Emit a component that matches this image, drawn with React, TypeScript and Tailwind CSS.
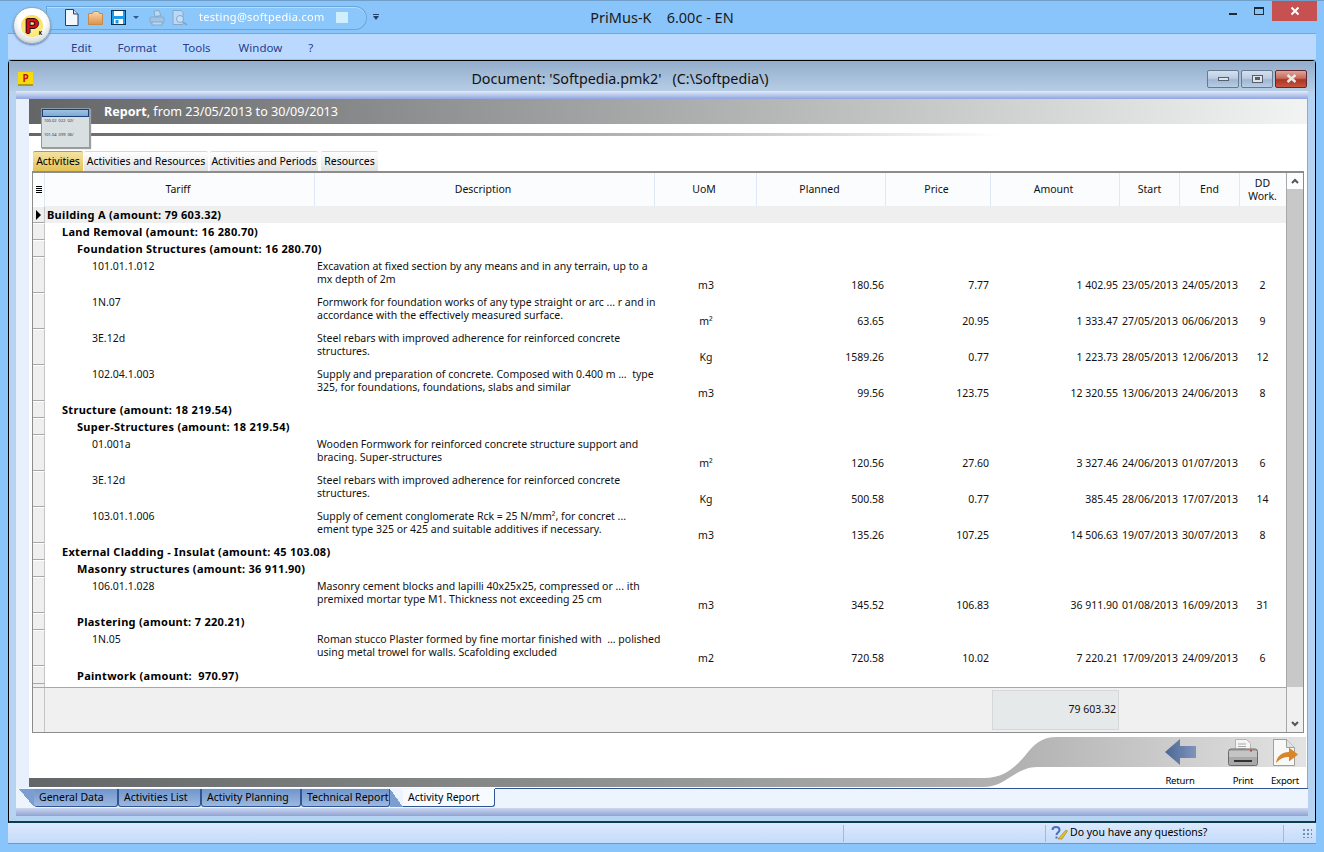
import type { ReactNode } from "react";

type Row =
  | { kind: "group"; level: 0 | 1 | 2; text: string; h: number; shaded?: boolean; arrow?: boolean }
  | {
      kind: "item";
      tariff: string;
      desc: [string, string];
      uom: string;
      planned: string;
      price: string;
      amount: string;
      start: string;
      end: string;
      dd: string;
    };

const rows: Row[] = [
  { kind: "group", level: 0, text: "Building A (amount: 79 603.32)", h: 17, shaded: true, arrow: true },
  { kind: "group", level: 1, text: "Land Removal (amount: 16 280.70)", h: 17 },
  { kind: "group", level: 2, text: "Foundation Structures (amount: 16 280.70)", h: 17 },
  { kind: "item", tariff: "101.01.1.012", desc: ["Excavation at fixed section by any means and in any terrain, up to a", "mx depth of 2m"], uom: "m3", planned: "180.56", price: "7.77", amount: "1 402.95", start: "23/05/2013", end: "24/05/2013", dd: "2" },
  { kind: "item", tariff: "1N.07", desc: ["Formwork for foundation works of any type straight or arc ... r and in", "accordance with the effectively measured surface."], uom: "m²", planned: "63.65", price: "20.95", amount: "1 333.47", start: "27/05/2013", end: "06/06/2013", dd: "9" },
  { kind: "item", tariff: "3E.12d", desc: ["Steel rebars with improved adherence for reinforced concrete", "structures."], uom: "Kg", planned: "1589.26", price: "0.77", amount: "1 223.73", start: "28/05/2013", end: "12/06/2013", dd: "12" },
  { kind: "item", tariff: "102.04.1.003", desc: ["Supply and preparation of concrete. Composed with 0.400 m ...  type", "325, for foundations, foundations, slabs and similar"], uom: "m3", planned: "99.56", price: "123.75", amount: "12 320.55", start: "13/06/2013", end: "24/06/2013", dd: "8" },
  { kind: "group", level: 1, text: "Structure (amount: 18 219.54)", h: 17 },
  { kind: "group", level: 2, text: "Super-Structures (amount: 18 219.54)", h: 17 },
  { kind: "item", tariff: "01.001a", desc: ["Wooden Formwork for reinforced concrete structure support and", "bracing. Super-structures"], uom: "m²", planned: "120.56", price: "27.60", amount: "3 327.46", start: "24/06/2013", end: "01/07/2013", dd: "6" },
  { kind: "item", tariff: "3E.12d", desc: ["Steel rebars with improved adherence for reinforced concrete", "structures."], uom: "Kg", planned: "500.58", price: "0.77", amount: "385.45", start: "28/06/2013", end: "17/07/2013", dd: "14" },
  { kind: "item", tariff: "103.01.1.006", desc: ["Supply of cement conglomerate Rck = 25 N/mm², for concret ...", "ement type 325 or 425 and suitable additives if necessary."], uom: "m3", planned: "135.26", price: "107.25", amount: "14 506.63", start: "19/07/2013", end: "30/07/2013", dd: "8" },
  { kind: "group", level: 1, text: "External Cladding - Insulat (amount: 45 103.08)", h: 17 },
  { kind: "group", level: 2, text: "Masonry structures (amount: 36 911.90)", h: 17 },
  { kind: "item", tariff: "106.01.1.028", desc: ["Masonry cement blocks and lapilli 40x25x25, compressed or ... ith", "premixed mortar type M1. Thickness not exceeding 25 cm"], uom: "m3", planned: "345.52", price: "106.83", amount: "36 911.90", start: "01/08/2013", end: "16/09/2013", dd: "31" },
  { kind: "group", level: 2, text: "Plastering (amount: 7 220.21)", h: 17 },
  { kind: "item", tariff: "1N.05", desc: ["Roman stucco Plaster formed by fine mortar finished with  ... polished", "using metal trowel for walls. Scafolding excluded"], uom: "m2", planned: "720.58", price: "10.02", amount: "7 220.21", start: "17/09/2013", end: "24/09/2013", dd: "6" },
  { kind: "group", level: 2, text: "Paintwork (amount:  970.97)", h: 18 },
];

const gridCols = "grid grid-cols-[270px_340px_102px_129px_105px_129px_60px_60px_45px]";
const headers = ["Tariff", "Description", "UoM", "Planned", "Price", "Amount", "Start", "End"];

function Selector({ h, arrow }: { h: number; arrow?: boolean }) {
  return (
    <div className={`w-[12px] shrink-0 bg-[#efefef] border-b border-b-[#a8a8a8] border-t border-t-white border-r border-r-[#c4c4c4] flex items-center justify-center ${h === 17 ? "h-[17px]" : h === 18 ? "h-[18px]" : "h-[36px]"}`}>
      {arrow && <div className="w-0 h-0 border-y-[5px] border-y-transparent border-l-[5px] border-l-black" />}
    </div>
  );
}

function TableRow({ row }: { row: Row }) {
  if (row.kind === "group") {
    const pad = row.level === 0 ? "pl-[2px]" : row.level === 1 ? "pl-[17px]" : "pl-[32px]";
    return (
      <div className="flex">
        <Selector h={row.h} arrow={row.arrow} />
        <div className={`flex-1 flex items-center font-bold tracking-[0.3px] text-[11px] leading-[13px] text-black whitespace-pre ${pad} ${row.shaded ? "bg-[#efefef]" : "bg-white"}`}>
          {row.text}
        </div>
      </div>
    );
  }
  return (
    <div className="flex">
      <Selector h={36} />
      <div className={`flex-1 h-[36px] bg-white ${gridCols}`}>
        <div className="pl-[47px] pt-[3px] leading-[13px]">{row.tariff}</div>
        <div className="pl-[2px] pt-[3px] leading-[13px] whitespace-pre">
          {row.desc[0]}
          <br />
          {row.desc[1]}
        </div>
        <div className="self-end pb-[1px] text-center leading-[13px]">{row.uom}</div>
        <div className="self-end pb-[1px] pr-[2px] text-right leading-[13px]">{row.planned}</div>
        <div className="self-end pb-[1px] pr-[2px] text-right leading-[13px]">{row.price}</div>
        <div className="self-end pb-[1px] pr-[2px] text-right leading-[13px]">{row.amount}</div>
        <div className="self-end pb-[1px] text-center leading-[13px]">{row.start}</div>
        <div className="self-end pb-[1px] text-center leading-[13px]">{row.end}</div>
        <div className="self-end pb-[1px] text-center leading-[13px]">{row.dd}</div>
      </div>
    </div>
  );
}

function DocIcon() {
  return (
    <svg width="15" height="17" viewBox="0 0 15 17">
      <path d="M1.500.5h8l4.500 4.500v11.500h-12.500z" fill="#f2f6fd" stroke="#2b3f63" />
      <path d="M9.500.5v4.500h4.500" fill="#cfdcf0" stroke="#2b3f63" />
    </svg>
  );
}

function FolderIcon() {
  return (
    <svg width="15" height="14" viewBox="0 0 15 14">
      <defs>
        <linearGradient id="fold" x1="0" y1="0" x2="0" y2="1">
          <stop offset="0" stopColor="#f8d9ad" />
          <stop offset="1" stopColor="#e0914a" />
        </linearGradient>
      </defs>
      <path d="M.5 2.500h4l1-2h5l1 2h3v11h-14z" fill="url(#fold)" stroke="#c98a4a" />
    </svg>
  );
}

function SaveIcon() {
  return (
    <svg width="15" height="15" viewBox="0 0 15 15">
      <rect x=".5" y=".5" width="14" height="14" fill="#1e9be8" stroke="#10324f" />
      <rect x="3" y="1" width="9" height="5" fill="#ffffff" />
      <rect x="3" y="9" width="9" height="5" fill="#ffffff" />
      <rect x="4.500" y="10" width="3" height="3.500" fill="#1e9be8" />
    </svg>
  );
}

function MutedPrinter() {
  return (
    <svg width="16" height="16" viewBox="0 0 16 16" className="opacity-60">
      <path d="M5 1l5-.500 2 5-6 1z" fill="#dbe6f2" stroke="#7f95ab" />
      <rect x="1" y="7" width="14" height="6" rx="1" fill="#b2c2d2" stroke="#7f95ab" />
      <rect x="3" y="12" width="10" height="3" fill="#dbe6f2" stroke="#7f95ab" />
    </svg>
  );
}

function MutedPreview() {
  return (
    <svg width="17" height="16" viewBox="0 0 17 16" className="opacity-60">
      <path d="M1 .5h8l2 2v12h-10z" fill="#dbe6f2" stroke="#7f95ab" />
      <circle cx="8" cy="9" r="3.500" fill="#e8f0f8" stroke="#7f95ab" />
      <path d="M11 12l4 3" stroke="#7f95ab" strokeWidth="2" />
    </svg>
  );
}

function ReturnIcon() {
  return (
    <svg width="31" height="26" viewBox="0 0 31 26">
      <defs>
        <linearGradient id="ret" x1="0" y1="0" x2="1" y2="0">
          <stop offset="0" stopColor="#4b6797" />
          <stop offset="1" stopColor="#8095b8" />
        </linearGradient>
      </defs>
      <path d="M0 13 15 0v7h16v12H15v7z" fill="url(#ret)" />
    </svg>
  );
}

function PrintIcon() {
  return (
    <svg width="30" height="27" viewBox="0 0 30 27">
      <path d="M7.500.500h11l4 4v9h-15z" fill="#f4f4f4" stroke="#b5b5b5" />
      <path d="M10 5h8M10 7.500h8M10 10h8" stroke="#a9a9a9" />
      <path d="M3 10h24q2.500 0 2.500 2.500v12q0 2-2 2h-25q-2 0-2-2v-12Q.500 10 3 10z" fill="#a9a9a9" stroke="#6b6b6b" />
      <rect x="1" y="12" width="28" height="6" fill="#c4c4c4" />
      <rect x="6" y="21" width="18" height="2" fill="#333333" />
      <rect x="22" y="11" width="2" height="1.500" fill="#c73a3a" />
    </svg>
  );
}

function ExportIcon() {
  return (
    <svg width="25" height="27" viewBox="0 0 25 27">
      <path d="M.500.500h13l8 8v18h-21z" fill="#f8f8f8" stroke="#9f9f9f" />
      <path d="M13.500.500v8h8" fill="#e2e2e2" stroke="#9f9f9f" />
      <path d="M3 24c1-7 6-11 13-11V8.500l9 7-9 7V18c-5-.5-9 1.500-13 6z" fill="#d98528" />
    </svg>
  );
}

function ToolAction({ icon, label, className }: { icon: ReactNode; label: string; className: string }) {
  return (
    <div className={`flex flex-col items-center ${className}`}>
      <div className="h-[30px] pt-[1px] flex items-center justify-center">{icon}</div>
      <span className="mt-[8px] leading-[13px] text-[9.500px] tracking-[-0.2px] text-black">{label}</span>
    </div>
  );
}

function DocButton({ children, red }: { children: ReactNode; red?: boolean }) {
  return (
    <div
      className={`w-[32px] h-[18px] rounded-[2px] border flex items-center justify-center ${
        red
          ? "border-[#5d2a33] bg-[linear-gradient(#e2a498_0%,#c76a58_45%,#a93523_55%,#c9553f_100%)]"
          : "border-[#65798f] bg-[linear-gradient(#d4e0ee_0%,#bccde2_45%,#9fb6d2_55%,#b9cde4_100%)]"
      }`}
    >
      {children}
    </div>
  );
}

function BottomTab({ label, className }: { label: string; className: string }) {
  return (
    <div className={`h-[18px] flex items-center pl-[5px] pt-[1px] rounded-b-[3px] border-b border-x border-x-[#2f5597] border-b-[#2f5597] bg-[linear-gradient(#6f95cb,#9db8df)] text-black whitespace-nowrap ${className}`}>
      {label}
    </div>
  );
}

function SubTab({ label, active, className }: { label: string; active?: boolean; className: string }) {
  return (
    <div
      className={`h-[20px] flex items-center justify-center rounded-t-[2px] border-t text-black whitespace-nowrap ${className} ${
        active
          ? "border-t-[#b99a3c] bg-[linear-gradient(#f3e2a4,#e4c354)]"
          : "border-t-[#d8d8d8] bg-[linear-gradient(#ffffff,#e0e0e0)]"
      }`}
    >
      {label}
    </div>
  );
}

function AppLogo() {
  return (
    <div className="absolute left-[13px] top-[6px] z-10 w-[38px] h-[37px] rounded-full border border-[#8fa6bd] bg-[radial-gradient(circle_at_50%_35%,#ffffff_45%,#dfe3e6_70%,#9aa3ab_100%)] shadow-[0_1px_2px_#5a7a99] flex items-center justify-center">
      <div className="relative w-[22px] h-[22px] rounded-full bg-[radial-gradient(circle_at_50%_60%,#fff3a0,#f7d84a)] flex items-center justify-center">
        <span className="font-['Liberation_Sans',sans-serif] font-bold text-[20px] leading-none text-[#d3101c] [text-shadow:1px_0_0_#3a0505,-1px_0_0_#3a0505,0_1px_0_#3a0505,0_-1px_0_#3a0505]">P</span>
        <span className="absolute right-[1px] bottom-[1px] text-[5px] leading-none font-bold text-black">K</span>
      </div>
    </div>
  );
}

export default function App() {
  return (
    <div className="relative w-[1324px] h-[852px] overflow-hidden flex flex-col bg-[#89c5fb] border-t border-t-[#6f9fc9] font-['Noto_Sans',sans-serif] text-[10.500px] text-[#111111]">
      <AppLogo />

      {/* Title bar */}
      <div className="relative h-[32px] shrink-0 flex items-center">
        <div className="ml-[46px] mt-[1px] w-[321px] h-[24px] rounded-r-full rounded-l-[10px] border border-[#6ba6d8] bg-[#8cc7fb] shadow-[inset_0_1px_0_#b4dcfd] flex items-center pl-[17px]">
          <DocIcon />
          <div className="ml-[9px]"><FolderIcon /></div>
          <div className="ml-[8px]"><SaveIcon /></div>
          <div className="ml-[7px] w-0 h-0 border-x-[3px] border-x-transparent border-t-[3px] border-t-[#2f5a90]" />
          <div className="ml-[10px]"><MutedPrinter /></div>
          <div className="ml-[7px]"><MutedPreview /></div>
          <span className="ml-[10px] w-[128px] text-[11px] text-white blur-[0.6px] whitespace-nowrap tracking-[0.3px]">testing@softpedia.com</span>
          <div className="ml-[9px] w-[12px] h-[11px] bg-[#cfeffd]" />
        </div>
        <div className="ml-[6px] flex flex-col items-center gap-[1px]">
          <div className="w-[6px] h-[1px] bg-[#22406e]" />
          <div className="w-0 h-0 border-x-[3px] border-x-transparent border-t-[4px] border-t-[#22406e]" />
        </div>
        <div className="flex-1" />
        <div className="flex items-start self-start">
          <div className="w-[26px] h-[20px] flex items-center justify-center"><div className="w-[8px] h-[2px] mt-[6px] bg-[#1c2a3a]" /></div>
          <div className="w-[26px] h-[20px] flex items-center justify-center"><div className="w-[10px] h-[8px] border border-t-2 border-[#1c2a3a]" /></div>
          <div className="mr-[7px] w-[45px] h-[20px] bg-[#c75050] flex items-center justify-center">
            <svg width="10" height="10" viewBox="0 0 10 10"><path d="M1.500 1.500l7 7M8.500 1.500l-7 7" stroke="#ffffff" strokeWidth="2" /></svg>
          </div>
        </div>
        <div className="absolute left-0 right-0 top-[7px] text-center text-[14.500px] leading-[18px] text-[#1a1a1a] whitespace-pre pointer-events-none">PriMus-K    6.00c - EN</div>
      </div>

      {/* Ribbon menu band */}
      <div className="mx-[8px] h-[27px] shrink-0 pt-[2px] bg-[#bbd9ff] border-t border-t-[#77a7d8] border-b border-b-[#9fc0e8] flex items-center text-[11.500px] text-[#26408c]">
        <span className="ml-[63px]">Edit</span>
        <span className="ml-[26px]">Format</span>
        <span className="ml-[26px]">Tools</span>
        <span className="ml-[28px]">Window</span>
        <span className="ml-[26px]">?</span>
      </div>

      {/* Document window */}
      <div className="mx-[8px] flex-1 min-h-0 flex flex-col rounded-t-[4px] border-x border-t border-black border-b-2 border-b-[#0d3c4a] shadow-[inset_0_1px_0_#ffffff] bg-[#b7d3f2]">
        <div className="h-[30px] shrink-0 flex items-center pt-[5px] pl-[9px] pr-[8px] bg-[linear-gradient(#93adca,#b6cde6)]">
          <div className="w-[15px] h-[14px] bg-[#f5d90a] border-b-2 border-b-[#b09a10] flex items-center justify-center font-bold text-[10px] leading-none text-[#c4121a]">P</div>
          <div className="flex-1 mt-[1px] text-center text-[14.300px] text-[#111111] whitespace-pre">Document: 'Softpedia.pmk2'   (C:\Softpedia\)</div>
          <div className="flex gap-[2px]">
            <DocButton><div className="w-[11px] h-[4px] bg-[#dfe4ea] border border-[#55606d]" /></DocButton>
            <DocButton><div className="w-[11px] h-[8px] bg-[#dfe4ea] border border-[#55606d] flex items-center justify-center"><div className="w-[5px] h-[3px] bg-[#55606d]" /></div></DocButton>
            <DocButton red>
              <svg width="11" height="9" viewBox="0 0 11 9"><path d="M1.500 1l8 7M9.500 1l-8 7" stroke="#e8e8e8" strokeWidth="2.500" /></svg>
            </DocButton>
          </div>
        </div>

        <div className="flex-1 min-h-0 flex flex-col px-[7px]">
          <div className="h-[8px] shrink-0 bg-[linear-gradient(#e3ecf9,#8fa5de)]" />
          <div className="flex h-[689px] shrink-0 border-r border-r-[#92a6de]">
            <div className="w-[13px] shrink-0 bg-[#e8f0fd]" />
            <div className="relative flex-1 min-w-0 flex flex-col bg-white">
              {/* Report heading */}
              <div className="h-[25px] shrink-0 flex items-center pt-[1px] pl-[75px] bg-[linear-gradient(90deg,#646566_0%,#8d8f90_30%,#b8baba_60%,#f2f3f3_100%)] text-[12.600px] text-white whitespace-pre">
                <b>Report</b>, from 23/05/2013 to 30/09/2013
              </div>
              <div className="mt-[9px] h-[3px] shrink-0 bg-[linear-gradient(90deg,#666666_0%,#b9b9b9_50%,#ffffff_76%)]" />
              <div className="absolute left-[12px] top-[9px] w-[49px] h-[40px] border border-[#8f9aa5] bg-[#d7dfe0] shadow-[1px_1px_1px_#a0a0a0]">
                <div className="h-[8px] border border-[#1d3f7a] bg-[linear-gradient(#9cc3e6,#7fa9d1)]" />
                <div className="mt-[1px] pl-[2px] text-[4px] leading-[5px] text-[#333333] whitespace-pre">100.02  022  02/</div>
                <div className="mt-[9px] pl-[2px] text-[4px] leading-[5px] text-[#333333] whitespace-pre">101.04  099  06/</div>
              </div>

              <div className="mt-[15px] ml-[4px] h-[20px] shrink-0 flex gap-[1px]">
                <SubTab label="Activities" active className="w-[50px]" />
                <SubTab label="Activities and Resources" className="w-[124px]" />
                <SubTab label="Activities and Periods" className="w-[108px] ml-[1px]" />
                <SubTab label="Resources" className="w-[57px] ml-[2px]" />
              </div>

              {/* Grid */}
              <div className="ml-[3px] w-[1272px] h-[562px] shrink-0 flex border-x border-b border-t-2 border-[#8c8c8c]">
                <div className="flex-1 min-w-0 flex flex-col">
                  <div className="flex h-[33px] shrink-0 bg-[#fbfcfe]">
                    <div className="w-[12px] shrink-0 bg-[#fbfcfe] flex flex-col items-center justify-center gap-[1px] border-r border-r-[#dfe8f5]">
                      <div className="w-[6px] h-[1px] bg-black" />
                      <div className="w-[6px] h-[1px] bg-black" />
                      <div className="w-[6px] h-[1px] bg-black" />
                      <div className="w-[6px] h-[1px] bg-black" />
                    </div>
                    <div className={`flex-1 ${gridCols}`}>
                      {headers.map((h, i) => (
                        <div key={h} className={`flex items-center justify-center border-r border-r-[#dfe8f5] ${i < 6 ? "pr-[3px]" : ""}`}>{h}</div>
                      ))}
                      <div className="flex items-center justify-center text-center leading-[13px]">DD<br />Work.</div>
                    </div>
                  </div>
                  <div className="h-[481px] shrink-0 flex flex-col">
                    {rows.map((r, i) => <TableRow key={i} row={r} />)}
                    <div className="flex-1 flex"><div className="w-[12px] bg-[#efefef] border-r border-r-[#c4c4c4]" /></div>
                  </div>
                  <div className="flex-1 flex border-t border-t-[#a8a8a8] bg-[#f0f0f0]">
                    <div className="w-[12px] shrink-0 border-r border-r-[#c4c4c4]" />
                    <div className="ml-[947px] mt-[2px] w-[127px] h-[40px] bg-[#e6e9ea] border border-[#d6d8d8] flex items-center justify-end pr-[2px]">79 603.32</div>
                  </div>
                </div>
                <div className="w-[17px] shrink-0 flex flex-col items-center bg-[#f0f0f0] border-l border-l-[#a8a8a8]">
                  <div className="h-[16px] w-full flex items-center justify-center bg-[#fbfcfe]">
                    <svg width="8" height="6" viewBox="0 0 8 6"><path d="M1 5l3-3 3 3" fill="none" stroke="#555555" strokeWidth="2" /></svg>
                  </div>
                  <div className="w-full h-[498px] bg-[#c8c8c8]" />
                  <div className="flex-1" />
                  <div className="h-[16px] flex items-center justify-center">
                    <svg width="8" height="6" viewBox="0 0 8 6"><path d="M1 1l3 3 3-3" fill="none" stroke="#555555" strokeWidth="2" /></svg>
                  </div>
                </div>
              </div>

              {/* Swoosh and actions */}
              <div className="relative h-[54px] shrink-0 flex justify-end pt-[4px]">
                <svg className="absolute inset-0" width="1277" height="54" viewBox="0 0 1277 54">
                  <defs>
                    <linearGradient id="swoosh" x1="0" y1="0" x2="1" y2="0">
                      <stop offset="0" stopColor="#636566" />
                      <stop offset="0.4" stopColor="#8a8c8c" />
                      <stop offset="0.78" stopColor="#b3b3b3" />
                      <stop offset="1" stopColor="#e3e3e3" />
                    </linearGradient>
                  </defs>
                  <path d="M0 45H955C975 45 985 35 995 24C1005 11 1012 4 1028 4H1277V34H1008C995 34 985 42 975 48C968 52 962 54 952 54H0Z" fill="url(#swoosh)" />
                </svg>
                <ToolAction icon={<ReturnIcon />} label="Return" className="relative w-[62px]" />
                <ToolAction icon={<PrintIcon />} label="Print" className="relative w-[48px] ml-[8px]" />
                <ToolAction icon={<ExportIcon />} label="Export" className="relative w-[36px] mr-[4px]" />
              </div>
            </div>
          </div>

          {/* Sheet tabs */}
          <div className="h-[20px] shrink-0 flex items-start bg-[#eef4fe]">
            <div className="mt-[1px] ml-[3px] flex">
              <div className="w-[15px] h-[18px] bg-[linear-gradient(to_bottom_left,#7c9dd0_50%,#eef4fe_50%)]" />
              <BottomTab label="General Data" className="w-[84px] border-l-0" />
              <BottomTab label="Activities List" className="w-[83px]" />
              <BottomTab label="Activity Planning" className="w-[100px]" />
              <BottomTab label="Technical Report" className="w-[89px]" />
              <div className="w-[13px] h-[18px] bg-[linear-gradient(to_top_right,#7c9dd0_50%,#eef4fe_50%)]" />
              <div className="w-[92px] h-[18px] flex items-center pl-[5px] pt-[1px] rounded-br-[3px] border-r border-b border-[#2f5597] bg-[#f7faff] text-black whitespace-nowrap">Activity Report</div>
            </div>
            <div className="flex-1 h-[1px] bg-[#2f5597]" />
          </div>
          <div className="h-[8px] shrink-0 bg-[linear-gradient(#cdd8f1,#8fa2d2)]" />
        </div>
      </div>

      {/* Status bar */}
      <div className="mx-[8px] mb-[8px] h-[21px] shrink-0 flex items-center bg-[linear-gradient(#dbe9fd_0%,#cfe2fb_50%,#c3dbfa_100%)] border-b border-b-[#5f9fd6]">
        <div className="ml-[835px] w-[1px] h-[17px] bg-[#9db9dc]" />
        <div className="ml-[201px] w-[1px] h-[17px] bg-[#9db9dc]" />
        <svg className="ml-[5px]" width="17" height="14" viewBox="0 0 17 14">
          <path d="M1.500 4c0-4 7-4 7 0 0 2.500-3 2.500-3 5" fill="none" stroke="#4c6fb8" strokeWidth="2" />
          <rect x="4.500" y="10.500" width="2" height="2" fill="#4c6fb8" />
          <path d="M7 13l8-9 1.500 1-5.500 8z" fill="#e8c02a" stroke="#7a6a1a" strokeWidth=".5" />
        </svg>
        <span className="ml-[2px] text-black">Do you have any questions?</span>
        <div className="flex-1" />
        <div className="w-[1px] h-[17px] bg-[#9db9dc]" />
        <div className="ml-[18px] mr-[4px] w-[10px] h-[10px] bg-[radial-gradient(#6f8fb8_1px,transparent_1px)] bg-[length:4px_4px]" />
      </div>
    </div>
  );
}
